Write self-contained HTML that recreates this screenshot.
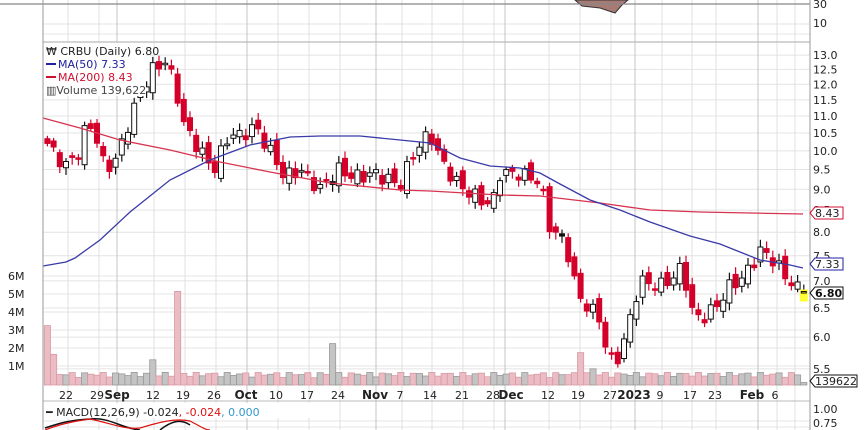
<!DOCTYPE html>
<html><head><meta charset="utf-8"><style>
html,body{margin:0;padding:0;background:#fff;width:864px;height:430px;overflow:hidden}
svg{display:block;font-family:"DejaVu Sans","Liberation Sans",sans-serif}
</style></head><body>
<svg id="s" width="864" height="430" viewBox="0 0 864 430" xmlns="http://www.w3.org/2000/svg">
<rect width="864" height="430" fill="#fff"/>
<g id="grid"></g>
<g id="vol"></g>
<g id="cand"></g>
<polyline id="ma200" fill="none" stroke="#d8334f" stroke-width="1.3"/>
<polyline id="ma50" fill="none" stroke="#3a3aa8" stroke-width="1.3"/>
<path d="M575,0 L582,6 L600,8 L615,13 L622,5 L628,0 Z" fill="#a87a74" stroke="#333" stroke-width="1"/>
<line x1="0" y1="4" x2="810" y2="4" stroke="#888" stroke-width="1.2"/>
<line x1="43" y1="42" x2="810" y2="42" stroke="#bbb" stroke-width="1.2"/>
<line x1="43" y1="401" x2="810" y2="401" stroke="#bbb" stroke-width="1"/>
<line x1="43" y1="0" x2="43" y2="430" stroke="#999"/>
<line x1="810" y1="0" x2="810" y2="430" stroke="#999"/>
<g font-size="11" fill="#222">
<text x="813" y="8">30</text><text x="813" y="27">10</text>
<text x="813" y="413">1.00</text><text x="813" y="427">0.75</text>
</g>
<g id="axis" font-size="11" fill="#222"></g>
<rect x="44" y="43" width="102" height="53" fill="#fff"/>
<g font-size="11">
<text x="46" y="55" fill="#222">₩ CRBU (Daily) 6.80</text>
<line x1="46" y1="64" x2="56" y2="64" stroke="#2020a0" stroke-width="2"/><text x="58" y="68" fill="#2020a0">MA(50) 7.33</text>
<line x1="46" y1="77" x2="56" y2="77" stroke="#d01030" stroke-width="2"/><text x="58" y="81" fill="#d01030">MA(200) 8.43</text>
<text x="46" y="94" fill="#444">▥Volume 139,622</text>
</g>
<path d="M45,428 C60,423 70,420 90,419 C110,417 120,428 140,430 M160,430 C170,422 180,418 190,425" fill="none" stroke="#111" stroke-width="1.5"/>
<path d="M45,430 C60,424 75,421 90,419 C110,423 125,430 140,428 C160,422 175,418 190,421 C200,426 205,430 210,430" fill="none" stroke="#e01010" stroke-width="1.2"/>
<rect x="44" y="403" width="280" height="15" fill="#fff"/>
<text x="46" y="416" font-size="11" fill="#222"><tspan font-weight="bold">━</tspan> MACD(12,26,9) -0.024<tspan fill="#e01010">, -0.024</tspan><tspan fill="#3399cc">, 0.000</tspan></text>
<g font-size="11">
<path d="M810,213 L815,207 L843,207 L843,219 L815,219 Z" fill="#fff" stroke="#d01030"/><text x="815" y="217" fill="#222">8.43</text>
<path d="M810,264 L815,258 L843,258 L843,270 L815,270 Z" fill="#fff" stroke="#2020a0"/><text x="815" y="268" fill="#222">7.33</text>
<path d="M810,293 L815,287 L843,287 L843,299 L815,299 Z" fill="#fff" stroke="#111"/><text x="815" y="297" fill="#111" font-weight="bold">6.80</text>
<path d="M810,381 L815,375 L857,375 L857,387 L815,387 Z" fill="#fff" stroke="#111"/><text x="815" y="385" fill="#222">139622</text>
</g>
</svg>
<script>
var NS="http://www.w3.org/2000/svg";
function el(p,t,a,txt){var e=document.createElementNS(NS,t);for(var k in a)e.setAttribute(k,a[k]);if(txt)e.textContent=txt;document.getElementById(p).appendChild(e);return e;}
function py(p){return 990.8-364.8*Math.log(p);}
[13,12.5,12,11.5,11,10.5,10,9.5,9,8.5,8,7.5,7,6.5,6,5.5].forEach(function(p){var y=py(p);el("grid","line",{x1:43,x2:810,y1:y,y2:y,stroke:"#e4e4e4"});el("axis","text",{x:813,y:y+4},p.toFixed(1));});
[6,5,4,3,2,1].forEach(function(m){var y=384-18*m;el("grid","line",{x1:43,x2:810,y1:y,y2:y,stroke:"#e4e4e4"});el("axis","text",{x:8,y:y+4},m+"M");});
[24,34].forEach(function(y){el("grid","line",{x1:43,x2:810,y1:y,y2:y,stroke:"#e4e4e4"});});
[421,427].forEach(function(y){el("grid","line",{x1:43,x2:810,y1:y,y2:y,stroke:"#e4e4e4"});});
var wk=[68,99,154,185,216,278,309,340,402,432,463,494,549,580,611,662,692,716,777,795];
wk.forEach(function(x){el("grid","line",{x1:x,x2:x,y1:0,y2:430,stroke:"#e0e0e0"});});
[117,247,376,505,635,758].forEach(function(x){el("grid","line",{x1:x,x2:x,y1:0,y2:430,stroke:"#c4c4c4"});});
var labs=[[66,"22"],[97,"29"],[153,"12"],[183,"19"],[214,"26"],[276,"10"],[307,"17"],[338,"24"],[400,"7"],[430,"14"],[462,"21"],[493,"28"],[548,"12"],[578,"19"],[610,"27"],[660,"9"],[690,"17"],[715,"23"],[775,"6"]];
labs.forEach(function(l){el("axis","text",{x:l[0],y:399,"text-anchor":"middle"},l[1]);});
[[117,"Sep"],[246,"Oct"],[375,"Nov"],[511,"Dec"],[634,"2023"],[752,"Feb"]].forEach(function(l){el("axis","text",{x:l[0],y:399,"text-anchor":"middle","font-weight":"bold","font-size":"12"},l[1]);});
var K=[[45,10.3],[55,9.9],[66,9.6],[80,10.0],[88,10.9],[97,10.3],[105,9.5],[117,9.8],[130,10.9],[140,11.7],[153,12.5],[165,12.8],[175,12.0],[183,10.8],[200,10.0],[214,9.5],[230,10.5],[240,10.4],[255,10.7],[270,10.0],[285,9.3],[300,9.5],[320,9.0],[338,9.5],[355,9.3],[375,9.4],[400,9.1],[415,10.0],[430,10.5],[440,9.8],[455,9.2],[470,8.9],[492,8.6],[500,9.4],[520,9.4],[540,9.2],[550,8.1],[565,7.8],[578,6.7],[590,6.5],[600,6.3],[609,5.6],[620,5.7],[630,6.3],[640,7.0],[660,6.9],[675,7.1],[683,7.3],[690,6.5],[700,6.3],[715,6.5],[730,6.9],[745,7.1],[760,7.6],[770,7.5],[785,7.1],[800,6.8],[810,6.8]];
function cl(x){for(var i=1;i<K.length;i++){if(x<=K[i][0]){var a=K[i-1],b=K[i],t=(x-a[0])/(b[0]-a[0]);return a[1]+(b[1]-a[1])*t;}}return 6.8;}
var prev=10.2;
var spikes={0:3.3,1:1.7,17:1.4,21:5.2,46:2.3,86:1.8,88:0.9};
for(var i=0;i<123;i++){
 var x=47.4+i*6.2;
 var c=cl(x)*(1+0.02*Math.sin(i*2.3));
 if(i==122)c=6.80;
 var o=prev*(1+0.016*Math.sin(i*1.7+1));
 if(i==122)o=6.78;
 var hi=Math.max(o,c)*(1.008+0.012*Math.abs(Math.sin(i*3.1)));
 var lo=Math.min(o,c)*(0.992-0.012*Math.abs(Math.sin(i*2.7)));
 var up=c>=o;
 var col=up?"#111":"#d5002a";
 el("cand","line",{x1:x,x2:x,y1:py(hi),y2:py(lo),stroke:col,"stroke-width":1.2});
 var yt=py(Math.max(o,c)),yb=py(Math.min(o,c));var h=Math.max(yb-yt,1.5);
 var fill=up?(c<prev?"#111":"#fff"):"#d5002a";
 if(i==122){fill="#ffff33";el("cand","rect",{x:x-4,y:yt-2,width:8,height:12,fill:"#ffff33"});}
 el("cand","rect",{x:x-2.5,y:yt,width:5,height:h,fill:fill,stroke:col,"stroke-width":1});
 var v=spikes[i]!==undefined?spikes[i]:(0.4+0.3*Math.abs(Math.sin(i*1.9)));
 if(i==122)v=0.14;
 var vh=v*18;
 el("vol","rect",{x:x-3.1,y:385-vh,width:6.2,height:vh,fill:up?"#c4c4c4":"#ebbcc3",stroke:up?"#999":"#d99aa5","stroke-width":0.8});
 prev=c;
}
document.getElementById("ma50").setAttribute("points","43,266 66,262 75,258 100,240 130,212 170,180 210,160 250,145 290,137 320,136 360,136 400,140 430,143 460,158 490,166 520,168 540,173 560,184 590,200 620,210 650,222 690,236 720,244 740,252 760,260 790,265 803,268");
document.getElementById("ma200").setAttribute("points","43,118 80,128 120,140 170,150 220,162 270,172 330,183 400,190 430,191 500,195 540,196 600,203 650,210 700,212 750,213 803,214");
</script>
</body></html>
